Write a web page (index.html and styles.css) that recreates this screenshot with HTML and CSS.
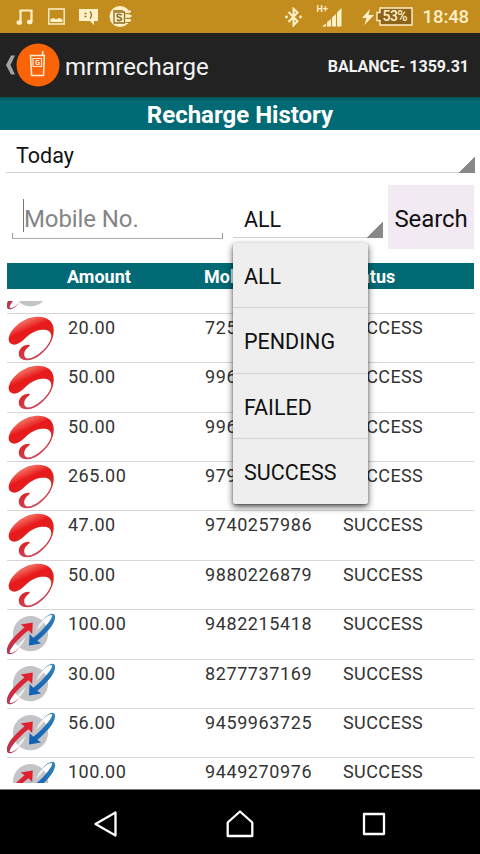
FILE: index.html
```html
<!DOCTYPE html>
<html lang="en">
<head>
<meta charset="utf-8">
<title>Recharge History</title>
<link rel="stylesheet" href="styles.css">
</head>
<body>
<svg class="defs" width="0" height="0" aria-hidden="true">
  <defs>
    <linearGradient id="swoosh" x1="0.2" y1="0" x2="0.65" y2="1">
      <stop offset="0" stop-color="#d9251f"/><stop offset="0.15" stop-color="#f2695c"/><stop offset="0.34" stop-color="#e8181a"/><stop offset="0.6" stop-color="#dc2424"/><stop offset="1" stop-color="#c75068"/>
    </linearGradient>
    <linearGradient id="redtail" x1="1" y1="0" x2="0" y2="1">
      <stop offset="0" stop-color="#e31e2d"/><stop offset="0.6" stop-color="#d42a3a"/><stop offset="1" stop-color="#b23a55"/>
    </linearGradient>
    <linearGradient id="bluetail" x1="1" y1="0" x2="0" y2="1">
      <stop offset="0" stop-color="#0f5fb4"/><stop offset="0.6" stop-color="#1f6fb8"/><stop offset="1" stop-color="#3b86b0"/>
    </linearGradient>
    <symbol id="airtel" viewBox="0 0 50 49">
      <path fill="url(#swoosh)" d="M2.700 25.500C2.500 17 15 4 30 2.700C40 2 46.500 6.500 47.500 13.500C49 23 44 32.500 35 40.300C30 44.500 25 46.500 20.500 46.300C15.500 46 12.500 43.500 12.800 39C13.400 34 18 30.500 23.500 30.700C24.700 32 21 33.500 19 37C17.200 40.500 18.500 44.300 22 44.600C30 44 44 32.500 45.300 22.500C45.500 16.500 40 15 34 16C27.500 17.200 23 20.500 19.500 24C14 29.500 9.500 31.500 6.300 30.300C4 29.500 2.800 28 2.700 25.500Z"/>
    </symbol>
    <symbol id="bsnl" viewBox="0 0 50 49">
      <circle cx="24.500" cy="23.700" r="17.600" fill="#c4c4c8"/>
      <path fill="#fff" opacity=".7" d="M7 42C11 36 15 31 20 27L17 33Q12 40 7 42ZM42.800 6C38.800 12 34.800 17 29.800 21L32.800 15Q37.800 8 42.800 6Z"/>
      <path fill="url(#redtail)" d="M14.700 14.400L26.800 12.500L26.200 24L22.500 20.200C17 24.500 12 29.500 8 34.500C4.500 39 2.500 42.800 4.300 43.100C7.500 43.200 11.500 39.800 14 36.500C11.500 40.500 7 44.300 3.200 44.300C.2 44 .2 40.500 1.500 37C3.500 31 11 23.500 18.500 17.200Z"/>
      <path fill="url(#bluetail)" transform="rotate(180 24.900 24)" d="M14.700 14.400L26.800 12.500L26.200 24L22.500 20.200C17 24.500 12 29.500 8 34.500C4.500 39 2.500 42.800 4.300 43.100C7.500 43.200 11.500 39.800 14 36.500C11.500 40.500 7 44.300 3.200 44.300C.2 44 .2 40.500 1.500 37C3.500 31 11 23.500 18.500 17.200Z"/>
    </symbol>
  </defs>
</svg>

<header class="status">
  <div class="status-left">
    <svg width="18" height="18" viewBox="0 0 18 18"><path d="M4.500 14V2.500H15.500V13.500" fill="none" stroke="#fff0c8" stroke-width="2.200"/><ellipse cx="3.300" cy="14.500" rx="2.800" ry="2.300"/><ellipse cx="13.700" cy="14" rx="2.800" ry="2.300"/></svg>
    <svg width="17" height="17" viewBox="0 0 17 17"><path d="M.8 1H16.200V16H.8Z" fill="none" stroke="#fff0c8" stroke-width="1.400"/><path d="M2.500 14V11.500Q5 8.500 8 11.500Q11 9 14.500 11.500V14Z"/></svg>
    <svg width="19" height="17" viewBox="0 0 19 17"><path d="M0 1H19V13H15V17L11 13H0Z"/><path d="M5.500 5.500H7.500M5.500 8.500H7.500M11 3.500Q14 7 11 10.500" fill="none" stroke="#9b711c" stroke-width="1.300"/></svg>
    <svg class="coin" width="23" height="23" viewBox="0 0 23 23"><circle cx="11" cy="11.500" r="10.500"/><path d="M14 6.500H22M16 11H22.500M16 15.500H22" stroke="#fff0c8" stroke-width="2"/><path d="M4 5.500H14M16.500 8.700H23M16.500 13.300H23M16.500 17.500H21" stroke="#b9851e" stroke-width="1.200"/><path d="M5 7H15.500V18H5Z" fill="#fff0c8" stroke="#8f6c24" stroke-width="1.300"/><path d="M12.800 10Q8 8 8 11Q8 12 10.300 12.400Q13 13 12.500 14.500Q11 16.600 7.800 14.800" fill="none" stroke="#8f6c24" stroke-width="1.600"/></svg>
  </div>
  <div class="status-right">
    <svg class="bt" width="17" height="20" viewBox="0 0 17 20"><path d="M3.500 5L12.500 14.300L8.500 18.300V1.700L12.500 5.500L3.500 15" fill="none" stroke="#fff0c8" stroke-width="2"/><circle cx="1.500" cy="10" r="1.400"/><circle cx="15.500" cy="10" r="1.400"/></svg>
    <div class="cell"><span class="net">H+</span><svg width="20" height="19" viewBox="0 0 20 19"><path d="M0 18.500L4 15.500V18.500ZM5 14.300L9 11V18.500H5ZM10 9.500L14 6V18.500H10ZM15 4.500L19.500 0V18.500H15Z"/></svg></div>
    <svg class="bolt" width="12" height="16" viewBox="0 0 12 16"><path d="M8 0L0 9H4.500L2.500 16L12 6H6.500Z"/></svg>
    <div class="battery"><svg width="37" height="19" viewBox="0 0 37 19"><path d="M4 1H36V18H4V13.500H1V5.500H4Z" fill="#8c6318" stroke="#fff0c8" stroke-width="1.400"/></svg><span>53%</span></div>
    <span class="clock">18:48</span>
  </div>
</header>

<div class="appbar">
  <svg class="up" width="10" height="20" viewBox="0 0 10 20"><path d="M0 10L5 .5H9L4.500 10L9 19.500H5Z" fill="#a3a3a3"/></svg>
  <svg class="logo" width="44" height="44" viewBox="0 0 44 44"><circle cx="22" cy="22" r="21.500" fill="#fb6307"/><path d="M14.500 12.500H28.300L27.500 32.500H15.600ZM26.700 12V8" fill="none" stroke="#ffe7d6" stroke-width="1.600"/><path d="M17 15.500H25.500V23.500H17ZM23 17.500H20.500Q18.800 19.500 20.500 21.500H23V19.500H21.500" fill="none" stroke="#ffe7d6" stroke-width="1.200"/></svg>
  <h1>mrmrecharge</h1>
  <span class="balance">BALANCE- 1359.31</span>
</div>
<h2 class="title">Recharge History</h2>

<main>
  <div class="spinner day"><span>Today</span></div>
  <div class="filters">
    <div class="field"><span>Mobile No.</span></div>
    <div class="kind">
      <div class="spinner state"><span>ALL</span></div>
      <ul class="menu"><li>ALL</li><li>PENDING</li><li>FAILED</li><li>SUCCESS</li></ul>
    </div>
    <div class="search">Search</div>
  </div>
  <div class="head"><span></span><span>Amount</span><span>Mobile</span><span>Status</span></div>
  <div class="list">
    <div class="row"><svg><use href="#bsnl"/></svg></div>
    <div class="row"><svg><use href="#airtel"/></svg><span>20.00</span><span>725</span><span>SUCCESS</span></div>
    <div class="row"><svg><use href="#airtel"/></svg><span>50.00</span><span>996</span><span>SUCCESS</span></div>
    <div class="row"><svg><use href="#airtel"/></svg><span>50.00</span><span>996</span><span>SUCCESS</span></div>
    <div class="row"><svg><use href="#airtel"/></svg><span>265.00</span><span>979</span><span>SUCCESS</span></div>
    <div class="row"><svg><use href="#airtel"/></svg><span>47.00</span><span>9740257986</span><span>SUCCESS</span></div>
    <div class="row"><svg><use href="#airtel"/></svg><span>50.00</span><span>9880226879</span><span>SUCCESS</span></div>
    <div class="row"><svg><use href="#bsnl"/></svg><span>100.00</span><span>9482215418</span><span>SUCCESS</span></div>
    <div class="row"><svg><use href="#bsnl"/></svg><span>30.00</span><span>8277737169</span><span>SUCCESS</span></div>
    <div class="row"><svg><use href="#bsnl"/></svg><span>56.00</span><span>9459963725</span><span>SUCCESS</span></div>
    <div class="row"><svg><use href="#bsnl"/></svg><span>100.00</span><span>9449270976</span><span>SUCCESS</span></div>
  </div>
</main>

<nav>
  <svg width="24" height="28" viewBox="0 0 24 28"><path d="M21.500 2.500V25.500L1.500 14Z"/></svg>
  <svg width="28" height="28" viewBox="0 0 28 28"><path d="M1.700 26V12.500L14 1.500L26.300 12.500V26Z"/></svg>
  <svg width="24" height="24" viewBox="0 0 24 24"><path d="M2 2H22V22H2Z"/></svg>
</nav>
</body>
</html>
```
FILE: styles.css
```css
* { box-sizing: border-box; }
body {
  margin: 0;
  width: 480px;
  height: 854px;
  overflow: hidden;
  display: flex;
  flex-direction: column;
  background: #fff;
  font-family: Roboto, sans-serif;
  color: #111;
}
svg { display: block; flex: none; }
.defs { position: absolute; }
h1, h2, ul { margin: 0; padding: 0; font-weight: 400; list-style: none; }

.status {
  height: 33px;
  flex: none;
  display: flex;
  justify-content: space-between;
  align-items: center;
  padding: 0 11px 0 16px;
  background: #c28c1f;
  color: #fff0c8;
}
.status svg { fill: #fff0c8; }
.status-left, .status-right { display: flex; align-items: center; }
.status-left { gap: 14px; }
.coin { margin-left: -3px; }
.bt { margin-right: 15px; }
.cell { position: relative; padding: 2px 0 0 5px; margin-right: 20px; }
.net { position: absolute; left: 0; top: -2px; font-size: 9px; line-height: 10px; font-weight: 700; }
.bolt { margin-right: 2px; }
.battery { position: relative; margin-right: 10px; }
.battery span { position: absolute; left: 7px; top: 0; font-size: 14px; line-height: 19px; font-weight: 500; letter-spacing: -.6px; }
.clock { font-size: 18.500px; line-height: 33px; padding-top: 2px; font-weight: 500; letter-spacing: -.1px; }

.appbar {
  height: 64px;
  flex: none;
  display: flex;
  align-items: center;
  padding: 0 11px 0 6px;
  background: #222;
  color: #f2f2f2;
}
.appbar h1 { margin: 3px 0 0 5px; font-size: 24px; line-height: 30px; }
.balance { margin-left: auto; padding-top: 2px; font-size: 16px; font-weight: 700; }

.title {
  height: 33px;
  flex: none;
  background: linear-gradient(#07535b, #026a74 4px);
  color: #fff;
  text-align: center;
  font-size: 24px;
  line-height: 37px;
  font-weight: 700;
}

main { height: 660px; flex: none; border-bottom: 1px solid #777; }
.spinner { position: relative; border-bottom: 1px solid #cfcfcf; }
.spinner::after {
  content: "";
  position: absolute;
  right: 0;
  bottom: -1px;
  width: 16px;
  height: 16px;
  background: linear-gradient(135deg, transparent 50%, #888 50%);
}
.day { height: 43px; margin: 0 5px 0 6px; padding-left: 10px; font-size: 21.500px; line-height: 51px; }
.filters { display: flex; height: 78px; margin-top: 12px; padding-left: 12px; }
.field {
  width: 211px;
  height: 54px;
  padding: 14px 0 0 11px;
  color: #858585;
  font-size: 24px;
  line-height: 40px;
  letter-spacing: -.1px;
  background: linear-gradient(#999, #999) 0 100% / 1px 5px no-repeat, linear-gradient(#999, #999) 100% 100% / 1px 5px no-repeat;
  border-bottom: 1px solid #aaa;
}
.field span { display: block; height: 33px; border-left: 1px solid #777; }
.kind { position: relative; width: 150px; margin-left: 10px; }
.state { height: 53px; padding-left: 11px; font-size: 21.500px; line-height: 69px; }
.menu {
  position: absolute;
  z-index: 2;
  left: 0;
  top: 58px;
  width: 135px;
  height: 261px;
  background: #eee;
  border-radius: 2px;
  box-shadow: 0 3px 7px rgba(0,0,0,.65), 0 1px 2px rgba(0,0,0,.3);
}
.menu li { height: 65.400px; padding-left: 11px; font-size: 21.500px; line-height: 67px; border-bottom: 1px solid #d2d2d2; }
.menu li:last-child { border: 0; }
.search { width: 86px; height: 64px; margin-left: 5px; background: #f1eaf2; text-align: center; font-size: 24px; line-height: 68px; letter-spacing: -.1px; }

.head, .row { display: grid; grid-template-columns: 61px 137px 138px 1fr; }
.head {
  height: 26px;
  margin: 0 6px 0 7px;
  background: #026a74;
  color: #fff;
  font-weight: 700;
  font-size: 18px;
  line-height: 27px;
}
.head span { margin-left: -1px; }
.head span:last-child { margin-left: 0; }
.list { height: 482px; margin: 12px 6px 0 7px; overflow: hidden; }
.row { height: 49.400px; border-bottom: 1px solid #d6d6d6; font-size: 18px; line-height: 28px; letter-spacing: .5px; color: #333; }
.row span:nth-of-type(2) { letter-spacing: .6px; }
.row span:last-child { letter-spacing: .4px; }
.row:first-child { margin-top: -36.500px; }
.row svg { width: 50px; height: 49px; margin-left: -1px; }

nav {
  flex: 1;
  background: #000;
  display: flex;
  align-items: center;
  justify-content: space-between;
  padding: 4px 94px 0 94px;
}
nav svg { fill: none; stroke: #fff; stroke-width: 2.300; stroke-linejoin: round; }
```
